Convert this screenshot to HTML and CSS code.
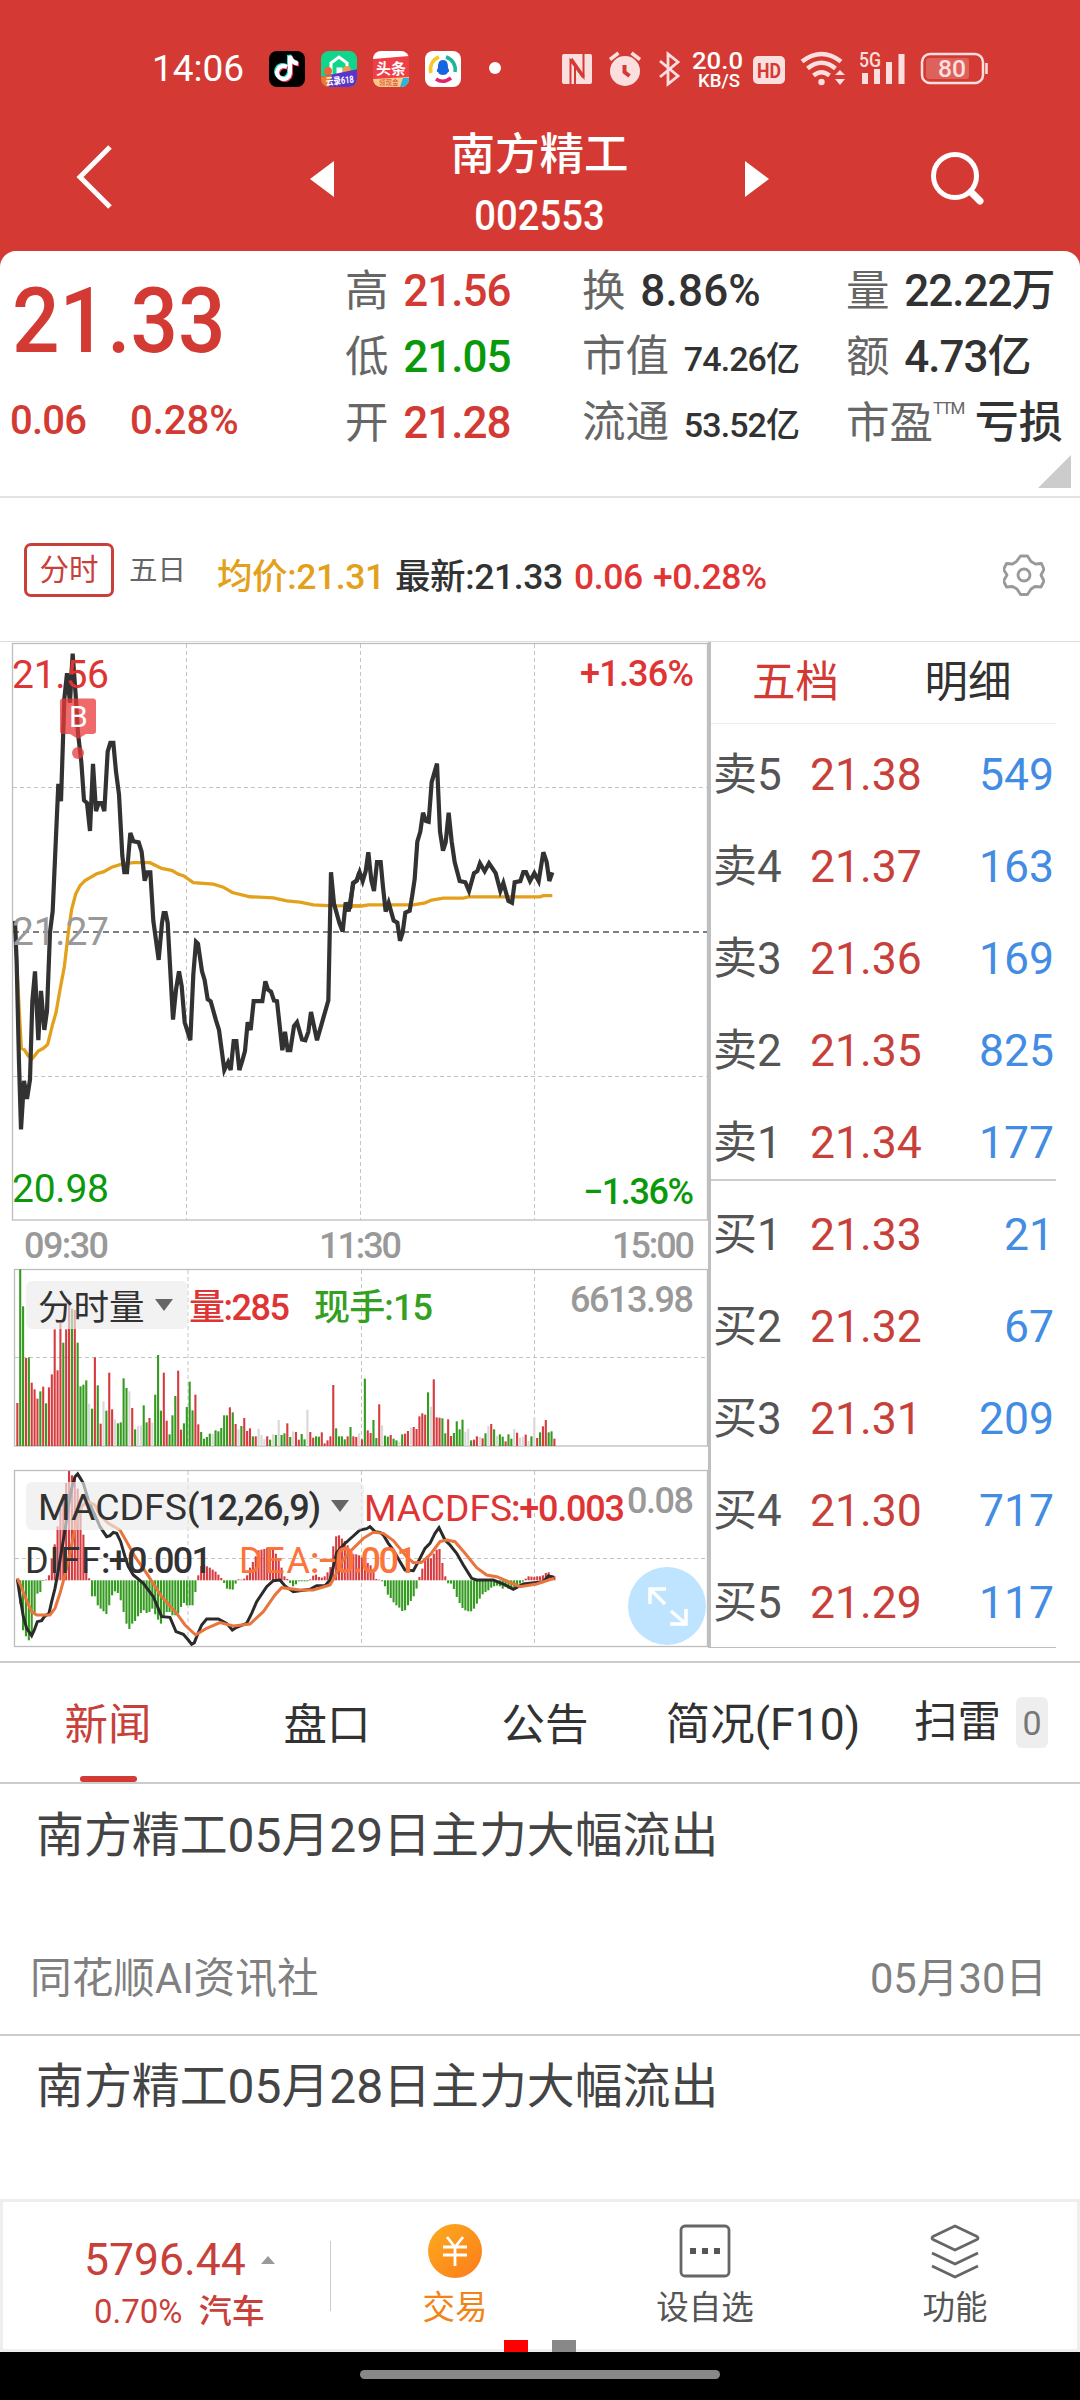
FILE: index.html
```html
<!DOCTYPE html>
<html lang="zh-CN">
  <head>
    <meta charset="UTF-8" />
    <meta name="viewport" content="width=device-width, initial-scale=1" />
    <title>南方精工 002553</title>
    <link rel="stylesheet" href="styles.css" />
  </head>
  <body>
    <header class="header">
      <div class="status">
        <span class="clock">14:06</span>
        <svg class="apps" width="234" height="40" viewBox="267 49 234 40">
          <defs>
            <clipPath id="app2"><rect x="321" y="51" width="36" height="36" rx="8" /></clipPath>
            <clipPath id="app3"><rect x="373" y="51" width="36" height="36" rx="8" /></clipPath>
          </defs>
          <rect x="269" y="51" width="36" height="36" rx="8" fill="#000" />
          <g fill="none" stroke-width="4">
            <path d="M287 67a6.500 6.500 0 1 0 3 6V56c1 5 4 7 8 7.500" stroke="#25e0dc" transform="translate(-1 -1)" />
            <path d="M287 67a6.500 6.500 0 1 0 3 6V56c1 5 4 7 8 7.500" stroke="#f23a5c" transform="translate(1 1)" />
            <path d="M287 67a6.500 6.500 0 1 0 3 6V56c1 5 4 7 8 7.500" stroke="#fff" />
          </g>
          <g clip-path="url(#app2)">
            <rect x="321" y="51" width="36" height="36" fill="#12d58c" />
            <path d="M331 74V63l8-6 8 6v11M338 76v-7h3v7" fill="none" stroke="#fff" stroke-width="3" />
            <circle cx="328" cy="71" r="4" fill="#f2643a" />
            <circle cx="347" cy="70" r="4" fill="#f59a4a" />
            <path d="M320 77l38-8v20h-38z" fill="#5b35c8" />
            <path d="M320 77l12-2-4 13h-8z" fill="#f07a2c" />
          </g>
          <text x="326" y="84" class="app-text" font-size="10" textLength="28" lengthAdjust="spacingAndGlyphs" transform="rotate(-6 340 82)">云录618</text>
          <g clip-path="url(#app3)">
            <rect x="373" y="51" width="36" height="36" fill="#ee3e48" />
            <path d="M373 51h36v5l-36 3z" fill="#fff" />
            <path d="M373 79l36-2v10h-36z" fill="#fbc987" />
            <path d="M400 87l3-9h7v9z" fill="#25b8dd" />
          </g>
          <text x="376" y="74" class="app-text" font-size="15" textLength="30">头条</text>
          <text x="379" y="85" font-size="6.500" fill="#d2442c">领现金</text>
          <rect x="425" y="51" width="36" height="36" rx="8" fill="#fff" />
          <g fill="none" stroke-width="3.500">
            <path d="M431 73a13 13 0 0 1 8-16" stroke="#f3c92e" />
            <path d="M446 57a13 13 0 0 1 9 15" stroke="#22b39a" />
            <path d="M436 79q7 5 15-1" stroke="#e3246c" />
          </g>
          <path d="M443 60c5 0 5 5 5 8 2 3 1 4 0 4q-1 3-5 3t-5-3c-1 0-2-1 0-4 0-3 0-8 5-8z" fill="#1765e0" />
          <circle cx="495" cy="68" r="6" fill="#fff" />
        </svg>
        <svg class="signals" width="430" height="52" viewBox="560 43 430 52">
          <rect x="562" y="54" width="30" height="30" rx="2" fill="#fbdfde" />
          <path d="M570.500 84V60.500l13 16.500V54M575 84V67" fill="none" stroke="#d43a33" stroke-width="2" />
          <path d="M571 59l12.500 18" stroke="#d43a33" stroke-width="3.500" />
          <circle cx="625" cy="71" r="15" fill="#fbdfde" />
          <path d="M610 59.500l8.500-6.500M640 59.500l-8.500-6.500" stroke="#fbdfde" stroke-width="3.500" />
          <path d="M624.500 65v7l5 4" fill="none" stroke="#d43a33" stroke-width="4" />
          <path d="M660 61l18 15-10 8V54l10 8-18 15" fill="none" stroke="#fbdfde" stroke-width="2.800" />
          <text x="692" y="69" class="net" font-size="24" textLength="51" lengthAdjust="spacingAndGlyphs">20.0</text>
          <text x="698" y="86.500" class="net" font-size="18" textLength="42" lengthAdjust="spacingAndGlyphs">KB/S</text>
          <rect x="753" y="56" width="32" height="28" rx="5" fill="#fbdfde" />
          <text x="757" y="77.500" class="hd" font-size="21" textLength="24" lengthAdjust="spacingAndGlyphs">HD</text>
          <g fill="none" stroke="#fbdfde" stroke-width="4.500">
            <path d="M802 61.500q19.500-15 39 0" />
            <path d="M807.500 68.500q14-11.500 28 0" />
            <path d="M813.500 75.500q8-6.500 16 0" />
          </g>
          <circle cx="821.500" cy="82" r="3.200" fill="#fbdfde" />
          <path d="M835 75l5-5 5 5zM835 79h10l-5 6z" fill="#fbdfde" />
          <text x="859" y="67" class="net5" font-size="20" textLength="22" lengthAdjust="spacingAndGlyphs">5G</text>
          <path d="M865 73v11M877 69v15M889 62v22M901.500 54v30" stroke="#fbdfde" stroke-width="6" />
          <rect x="922" y="54" width="61" height="29" rx="8" fill="none" stroke="#fbdfde" stroke-width="2.500" />
          <rect x="926" y="58" width="43" height="21" rx="3" fill="#de625c" />
          <path d="M986.500 63v11" stroke="#fbdfde" stroke-width="2.500" />
          <text x="938" y="77" class="net5" font-size="24" textLength="28" lengthAdjust="spacingAndGlyphs">80</text>
        </svg>
      </div>
      <div class="navbar">
        <svg class="back" width="40" height="68" viewBox="0 0 40 68"><path d="M35 4L5 34l30 30" /></svg>
        <svg class="prev" width="24" height="36" viewBox="0 0 24 36"><path d="M24 0v36L0 18z" /></svg>
        <div class="stock">
          <h1>南方精工</h1>
          <span class="code">002553</span>
        </div>
        <svg class="next" width="24" height="36" viewBox="0 0 24 36"><path d="M0 0v36l24-18z" /></svg>
        <svg class="search" width="56" height="56" viewBox="0 0 56 56">
          <circle cx="25" cy="25" r="21.500" /><path d="M41 41l9 9" />
        </svg>
      </div>
    </header>

    <section class="quote">
      <div class="price">
        <strong>21.33</strong>
        <div class="change"><span>0.06</span><span>0.28%</span></div>
      </div>
      <ul class="col col-a">
        <li>高 <b class="up">21.56</b></li>
        <li>低 <b class="down">21.05</b></li>
        <li>开 <b class="up">21.28</b></li>
      </ul>
      <ul class="col col-b">
        <li>换 <b class="rate">8.86%</b></li>
        <li>市值 <b class="small">74.26亿</b></li>
        <li>流通 <b class="small">53.52亿</b></li>
      </ul>
      <ul class="col col-c">
        <li>量 <b>22.22万</b></li>
        <li>额 <b>4.73亿</b></li>
        <li>市盈<sup>TTM</sup> <b class="loss">亏损</b></li>
      </ul>
      <i class="corner"></i>
    </section>

    <section class="toolbar">
      <span class="mode active">分时</span>
      <span class="mode">五日</span>
      <span class="info avg">均价:21.31</span>
      <span class="info last">最新:21.33</span>
      <span class="info diff">0.06</span>
      <span class="info pct">+0.28%</span>
      <svg class="gear" width="42" height="42" viewBox="-21 -21 42 42">
        <path d="M-3.500-19h7l3.500 5.500 4.500 2.500 6-.5 2.500 6-3 5.500 3 6-3 6-6-.5-4 2.500-3.500 5.500h-7l-3.500-5.500-4.500-2.500-6 .5-3-6 3.500-6-3.500-5.500 3-6 6 .5 4-2.500z" />
        <circle r="6" />
      </svg>
    </section>

    <main class="trade">
      <svg class="chart" width="708" height="1006" viewBox="0 642 708 1006">
        <g class="frame">
          <rect x="12.500" y="643.500" width="695" height="576.500" />
          <rect x="14.500" y="1269.500" width="693" height="176.500" />
          <rect x="14.500" y="1470.500" width="693" height="176" />
        </g>
        <g class="grid">
          <path d="M186.500 644v576M360.500 644v576M534.500 644v576M13 787.500h694M13 1076.500h694" />
          <path d="M188 1270v176M361.500 1270v176M534.500 1270v176M15 1357.500h692" />
          <path d="M188 1471v175M361.500 1471v175M534.500 1471v175M15 1558.500h692" />
        </g>
        <path class="base" d="M13 932h694" />

        <!-- 分时走势 -->
        <g class="line avg-line">
          <polyline transform="translate(0 630) scale(.33333 .3827)" points="45,770 55,950 64,1093 73,1097 85,1113 97,1120 115,1100 130,1093 143,1083 158,1030 168,1000 180,940 193,880 205,790 215,730 227,690 240,668 255,655 290,637 310,632 335,620 365,612 400,608 450,608 485,623 515,628 535,638 550,642 580,660 640,664 670,672 697,686 750,697 820,700 860,708 900,711 940,718 985,720 1080,721" />
          <polyline transform="translate(350 630) scale(.33333 .3954)" points="0,698 35,698 55,695 190,695 225,690 245,683 280,678 340,678 355,675 570,675 580,672 607,672" />
        </g>
        <g class="line price-line">
          <polyline transform="translate(0 630) scale(.33333 .3827)" points="45,760 50,870 57,1130 63,1305 72,1178 81,1225 90,1175 97,970 105,892 115,1072 123,943 133,1045 141,995 150,790 158,735 170,500 175,402 183,447 193,180 201,113 210,190 218,62 227,170 234,270 244,345 252,445 261,452 270,525 279,350 288,473 296,452 305,452 313,473 323,318 331,295 340,295 348,370 357,430 367,590 373,633 381,633 391,530 400,552 416,555 425,580 434,655 442,633 451,633 460,760 476,862 486,765 491,740 497,740 503,765 519,1018 528,940 537,892 545,930 554,1025 571,1072 580,900 588,815 594,820 606,892 614,915 623,965 632,970 648,1020 657,1045 673,1150 684,1130 692,1150 701,1074 709,1074 718,1150 727,1125 735,1100 743,1025 752,1045 761,970 787,970 796,918 804,940 813,945 822,968 831,970 847,1098 855,1050 863,1098 871,1098 882,1035 891,1025 906,1070 916,1072 925,1050 933,998 951,1072 968,1020 985,968 993,633 1002,715 1018,765 1028,788 1037,712 1046,735 1060,662 1070,655 1078,633" />
          <polyline transform="translate(350 630) scale(.33333 .3954)" points="0,705 9,640 21,633 29,613 38,635 47,610 55,562 64,633 72,660 81,587 92,587 99,650 107,712 116,690 131,735 142,740 150,786 158,765 166,715 179,710 187,670 194,630 202,535 211,510 219,462 228,483 236,485 245,385 261,338 270,510 279,558 287,537 296,462 305,535 314,587 329,635 346,638 357,660 372,615 382,610 390,590 404,610 417,590 437,615 451,660 460,640 475,685 486,690 494,638 511,635 520,612 528,612 540,635 553,615 566,635 580,562 590,587 598,635 607,613" />
        </g>
        <g class="buy">
          <path d="M63 698.500h30q3 0 3 3v29.500q0 3-3 3h-7l-8 5-8-5h-7q-3 0-3-3v-29.500q0-3 3-3z" />
          <circle cx="78" cy="753" r="6" />
          <text x="69" y="727" font-size="30" fill="#fff">B</text>
        </g>
        <g font-size="39">
          <text x="12" y="687.500" class="t-red" textLength="97">21.56</text>
          <text x="12" y="945" class="t-gray" textLength="97">21.27</text>
          <text x="12" y="1202" class="t-green" textLength="97">20.98</text>
        </g>
        <g class="din" font-size="36">
          <text x="580" y="685.500" class="t-red" textLength="114">+1.36%</text>
          <text x="583" y="1203.500" class="t-green" textLength="111">−1.36%</text>
          <text x="24" y="1258" class="t-gray" textLength="85">09:30</text>
          <text x="319" y="1258" class="t-gray" textLength="83">11:30</text>
          <text x="612" y="1258" class="t-gray" textLength="83">15:00</text>
        </g>

        <!-- 成交量 -->
        <g id="volume"></g>
        <rect class="pill" x="26" y="1281" width="162" height="48" rx="6" />
        <text x="38" y="1320" font-size="35.500" class="t-dark">分时量</text>
        <path class="arrow" d="M155 1299h18l-9 12z" />
        <g class="din" font-size="36">
          <text x="189" y="1320" class="t-red" textLength="101">量:285</text>
          <text x="314" y="1320" class="t-green2" textLength="119">现手:15</text>
          <text x="570" y="1312" class="t-gray" textLength="124">6613.98</text>
        </g>

        <!-- MACD -->
        <g id="macd"></g>
        <g class="line diff-line">
          <polyline transform="translate(0 1200) scale(.33333)" points="52,1137 60,1190 70,1250 80,1285 95,1307 103,1290 112,1265 125,1262 133,1250 147,1240 155,1205 165,1165 175,1110 185,1050 195,990 205,920 215,865 225,830 233,822 243,838 250,850 265,900 280,935 300,980 320,1010 330,1007 340,997 350,1000 362,1025 375,1070 385,1100 400,1125 430,1150 460,1190 485,1250 510,1252 528,1295 550,1303 565,1320 575,1333 583,1328 590,1310 605,1275 620,1257 655,1257 680,1270 697,1290 710,1282 740,1270 755,1240 770,1205 800,1160 820,1142 840,1140 855,1158 880,1175 930,1168 950,1157 975,1157 990,1140 1000,1100 1010,1058 1030,1035 1060,1008 1080,990 1100,986 1110,980 1125,995 1140,997 1150,1005 1165,1030 1180,1050 1200,1085 1215,1110 1240,1112 1255,1085 1275,1045 1290,1030 1305,1000 1317,983 1335,1020 1350,1035 1370,1060 1390,1095 1415,1135 1430,1140 1480,1140 1510,1152 1540,1168 1570,1152 1630,1145 1645,1128 1662,1132" />
        </g>
        <g class="line dea-line">
          <polyline transform="translate(0 1200) scale(.33333)" points="52,1135 62,1155 75,1190 95,1235 110,1245 150,1245 165,1225 180,1180 195,1125 210,1060 220,1010 232,960 245,920 262,903 285,915 300,945 325,970 360,990 380,1025 405,1070 440,1120 485,1190 530,1240 555,1275 587,1305 620,1285 660,1268 700,1278 750,1272 790,1235 825,1185 845,1163 900,1170 940,1170 990,1155 1005,1130 1025,1085 1055,1050 1090,1015 1120,997 1150,1000 1180,1022 1220,1070 1240,1088 1265,1087 1290,1065 1320,1025 1340,1020 1365,1025 1395,1060 1430,1103 1460,1125 1490,1130 1520,1143 1560,1160 1610,1152 1662,1135" />
        </g>
        <rect class="pill" x="26" y="1482" width="338" height="48" rx="6" />
        <g font-size="36" class="t-dark">
          <text x="38" y="1520" textLength="149" lengthAdjust="spacingAndGlyphs">MACDFS</text>
          <text x="187" y="1520" class="din" textLength="134">(12,26,9)</text>
        </g>
        <path class="arrow" d="M331 1500h18l-9 12z" />
        <g font-size="36">
          <text x="364" y="1521" class="t-red" textLength="148" lengthAdjust="spacingAndGlyphs">MACDFS</text>
          <text x="511" y="1521" class="t-red din" textLength="114">:+0.003</text>
          <text x="627" y="1513" class="t-gray din" textLength="67">0.08</text>
          <text x="25" y="1573" class="t-dark" textLength="76">DIFF</text>
          <text x="101" y="1573" class="t-dark din" textLength="111">:+0.001</text>
          <text x="239" y="1573" class="t-orange" textLength="71">DEA</text>
          <text x="310" y="1573" class="t-orange din" textLength="107">:−0.001</text>
        </g>
        <circle cx="667" cy="1606" r="39" fill="#bfe4ff" />
        <path class="expand" d="M665 1604l-15-15M650 1604v-15h16M671 1611l15 13M686 1609v15h-16" />
      </svg>

      <aside class="book">
        <div class="book-tabs"><span class="on">五档</span><span>明细</span></div>
        <div class="sell">
          <div class="row"><span>卖5</span><b>21.38</b><i>549</i></div>
          <div class="row"><span>卖4</span><b>21.37</b><i>163</i></div>
          <div class="row"><span>卖3</span><b>21.36</b><i>169</i></div>
          <div class="row"><span>卖2</span><b>21.35</b><i>825</i></div>
          <div class="row"><span>卖1</span><b>21.34</b><i>177</i></div>
        </div>
        <div class="buys">
          <div class="row"><span>买1</span><b>21.33</b><i>21</i></div>
          <div class="row"><span>买2</span><b>21.32</b><i>67</i></div>
          <div class="row"><span>买3</span><b>21.31</b><i>209</i></div>
          <div class="row"><span>买4</span><b>21.30</b><i>717</i></div>
          <div class="row"><span>买5</span><b>21.29</b><i>117</i></div>
        </div>
      </aside>
    </main>

    <nav class="tabs">
      <span class="tab on">新闻</span>
      <span class="tab">盘口</span>
      <span class="tab">公告</span>
      <span class="tab">简况(F10)</span>
      <span class="tab mine">扫雷<em>0</em></span>
    </nav>

    <section class="news">
      <article>
        <h2>南方精工05月29日主力大幅流出</h2>
        <div class="meta"><span>同花顺AI资讯社</span><span>05月30日</span></div>
      </article>
      <article>
        <h2>南方精工05月28日主力大幅流出</h2>
      </article>
    </section>

    <footer class="bottom">
      <div class="index">
        <div class="index-value">5796.44<i></i></div>
        <div class="index-sub">0.70% <span>汽车</span></div>
      </div>
      <div class="action trade-btn">
        <svg width="56" height="56" viewBox="0 0 56 56">
          <defs>
            <linearGradient id="gold" x1="0" y1="0" x2="1" y2="1">
              <stop offset="0" stop-color="#fdab1e" /><stop offset="1" stop-color="#fc7c1b" />
            </linearGradient>
          </defs>
          <circle cx="28" cy="28" r="27" fill="url(#gold)" />
          <path d="M20 14l8 10 8-10M28 24v19M16 24h24M16 32h24" fill="none" stroke="#fff" stroke-width="2.800" />
        </svg>
        <span>交易</span>
      </div>
      <div class="action">
        <svg width="56" height="56" viewBox="0 0 56 56">
          <rect x="4" y="3" width="48" height="50" rx="4" fill="none" stroke="#666" stroke-width="2.800" />
          <path d="M13 28h6M25 28h6M37 28h6" stroke="#555" stroke-width="6" />
        </svg>
        <span>设自选</span>
      </div>
      <div class="action">
        <svg width="56" height="56" viewBox="0 0 56 56">
          <path d="M28 3L6 13.500q-2 1.500 0 3L28 27l22-10.500q2-1.500 0-3zM5 30l23 11 23-11M5 43l23 11 23-11" fill="none" stroke="#666" stroke-width="2.800" stroke-linejoin="round" />
        </svg>
        <span>功能</span>
      </div>
      <div class="pager"><i class="on"></i><i></i></div>
    </footer>
    <div class="homebar"><i></i></div>

    <script src="chart.js"></script>
  </body>
</html>
```
FILE: styles.css
```css
* {
  box-sizing: border-box;
}

body {
  margin: 0;
  width: 1080px;
  height: 2400px;
  overflow: hidden;
  background: #d43a33;
  color: #323232;
  font-family: Roboto, "Noto Sans CJK SC", sans-serif;
}

ul {
  margin: 0;
  padding: 0;
  list-style: none;
}

i,
em {
  font-style: normal;
}

svg {
  display: block;
  flex: none;
}

.header {
  height: 251px;
  background: #d43a33;
}

.status {
  display: flex;
  align-items: center;
  height: 102px;
  padding: 36px 0 0 152px;
}

.clock {
  width: 115px;
  color: #fff;
  font-size: 37px;
  line-height: 42px;
}

.signals {
  margin-left: 59px;
}

.app-text {
  fill: #fff;
  font-weight: 700;
}

.net {
  fill: #fff;
  font-weight: 500;
}

.net5 {
  fill: #fbdfde;
  font-weight: 500;
}

.hd {
  fill: #d43a33;
  font-weight: 700;
}

.navbar {
  display: flex;
  height: 149px;
  padding-left: 75px;
}

.back {
  margin-top: 41px;
}

.back path,
.search * {
  fill: none;
  stroke: #fff;
  stroke-width: 5;
}

.search path {
  stroke-width: 7;
  stroke-linecap: round;
}

.prev,
.next {
  margin-top: 59px;
  fill: #fff;
}

.prev {
  margin-left: 195px;
}

.stock {
  width: 411px;
  color: #fff;
  text-align: center;
}

.stock h1 {
  margin: 22px 0 0;
  font-size: 44.5px;
  font-weight: 500;
  line-height: 62px;
}

.code {
  display: block;
  font-size: 42px;
  font-weight: 500;
  line-height: 60px;
  transform: scaleX(0.91);
}

.search {
  margin: 49px 0 0 161px;
}

.quote {
  position: relative;
  display: flex;
  height: 247px;
  padding-top: 7px;
  background: #fff;
  border-radius: 16px 16px 0 0;
  border-bottom: 2px solid #e2e2e2;
}

.price {
  width: 345px;
  color: #d23a33;
  font-weight: 500;
}

.price strong {
  display: block;
  margin: 14px 0 0 12px;
  font-size: 90px;
  font-weight: 500;
  line-height: 100px;
  transform: scaleX(0.93);
  transform-origin: left;
}

.change {
  display: flex;
  margin: 25px 0 0 10px;
  font-size: 40px;
  line-height: 48px;
  letter-spacing: -0.8px;
}

.change span:first-child {
  width: 120px;
}

.change span:last-child {
  letter-spacing: 0;
}

.col li {
  height: 66px;
  color: #666;
  font-size: 43.5px;
  line-height: 66px;
  white-space: nowrap;
  word-spacing: -3px;
}

.col-a {
  width: 237px;
}

.col-b {
  width: 264px;
}

.col b {
  margin-left: 7px;
  color: #323232;
  font-size: 44px;
  font-weight: 500;
  letter-spacing: -1px;
}

.col b.up {
  color: #d23a33;
}

.col b.down {
  color: #0a990a;
}

.col b.rate {
  letter-spacing: 0.2px;
}

.col b.small {
  margin-left: 7px;
  font-size: 34px;
  letter-spacing: -0.9px;
}

.col b.loss {
  margin-left: 7px;
  letter-spacing: 0;
}

.col sup {
  display: inline-block;
  width: 27px;
  font-size: 17px;
  line-height: 20px;
  letter-spacing: -1.5px;
  vertical-align: 24px;
}

.corner {
  position: absolute;
  right: 9px;
  bottom: 8px;
  border-left: 33px solid transparent;
  border-bottom: 33px solid #ccc;
}

.toolbar {
  display: flex;
  align-items: center;
  height: 144px;
  padding: 0 35px 0 24px;
  background: #fff;
  border-bottom: 1px solid #ddd;
}

.mode {
  margin-right: 31px;
  padding-top: 2px;
  color: #666;
  font-size: 28.5px;
  line-height: 48px;
}

.mode.active {
  width: 90px;
  height: 54px;
  margin-right: 15px;
  padding-top: 1px;
  border: 3px solid #c8403a;
  border-radius: 7px;
  color: #c8403a;
  font-size: 29.5px;
  line-height: 47px;
  text-align: center;
}

.info {
  font-size: 35.5px;
  font-weight: 500;
  letter-spacing: -0.4px;
  line-height: 40px;
  white-space: nowrap;
  padding-top: 14px;
}

.avg {
  width: 178px;
  color: #e3a01b;
}

.last {
  width: 179px;
}

.diff {
  width: 79px;
  color: #e03535;
}

.pct {
  color: #e03535;
}

.gear {
  margin: 10px 0 0 auto;
  fill: none;
  stroke: #999;
  stroke-width: 2.8;
  stroke-linejoin: round;
}

.trade {
  display: flex;
  height: 1006px;
  background: #fff;
}

.frame rect {
  fill: none;
  stroke: #bdbdbd;
  stroke-width: 1.3;
}

.grid path {
  stroke: #c4c4c4;
  stroke-width: 1;
  stroke-dasharray: 4 3;
}

.base {
  stroke: #555;
  stroke-width: 1.5;
  stroke-dasharray: 6 4;
}

.line polyline {
  fill: none;
  vector-effect: non-scaling-stroke;
}

.price-line polyline {
  stroke: #323232;
  stroke-width: 4.2;
}

.avg-line polyline {
  stroke: #e3a01b;
  stroke-width: 3.3;
}

.diff-line polyline {
  stroke: #2b2b2b;
  stroke-width: 3;
}

.dea-line polyline {
  stroke: #e9743c;
  stroke-width: 3;
}

.buy path,
.buy circle {
  fill: #e93a3a;
  fill-opacity: 0.75;
}

.din {
  font-weight: 500;
}

.t-red {
  fill: #de3434;
}

.t-green {
  fill: #0a990a;
}

.t-green2 {
  fill: #33a01f;
}

.t-gray {
  fill: #999;
}

.t-dark {
  fill: #323232;
}

.t-orange {
  fill: #fb7439;
}

.pill {
  fill: #ebebeb;
  fill-opacity: 0.66;
}

.arrow {
  fill: #666;
}

.expand {
  fill: none;
  stroke: #fff;
  stroke-width: 3.5;
}

.book {
  width: 348px;
  border-left: 3px solid #bfbfbf;
}

.book-tabs {
  display: flex;
  height: 82px;
  border-bottom: 1px solid #ececec;
  font-size: 43.5px;
  line-height: 82px;
}

.book-tabs span {
  width: 173px;
  padding-left: 41px;
}

.book-tabs .on {
  color: #d23a33;
}

.sell {
  height: 457px;
  padding-top: 5px;
  border-bottom: 2px solid #ccc;
}

.buys {
  height: 467px;
  padding-top: 8px;
  border-bottom: 1px solid #bfbfbf;
}

.row {
  display: flex;
  height: 92px;
  padding-left: 2px;
  font-size: 44.5px;
  line-height: 92px;
}

.row span {
  width: 97px;
  color: #555;
  font-size: 44px;
}

.row b {
  width: 130px;
  color: #c8403a;
  font-weight: 400;
}

.row i {
  flex: 1;
  padding-right: 2px;
  color: #438ce3;
  text-align: right;
}

.tabs {
  display: flex;
  height: 136px;
  padding-top: 13px;
  background: #fff;
  border-bottom: 2px solid #ccc;
}

.tab {
  position: relative;
  flex: none;
  width: 218px;
  border-top: 2px solid #ccc;
  font-size: 43.5px;
  line-height: 125px;
  text-align: center;
}

.tab:nth-child(4) {
  font-size: 44.5px;
}

.tab.on {
  padding-right: 2px;
  color: #c8403a;
}

.tab.on::after {
  content: "";
  position: absolute;
  left: 80px;
  bottom: 0;
  width: 57px;
  height: 6px;
  border-radius: 3px;
  background: #d23a33;
}

.tab.mine {
  display: flex;
  align-items: center;
  width: 208px;
  padding-left: 42px;
}

.mine em {
  width: 32px;
  height: 51px;
  margin-left: 15px;
  border-radius: 6px;
  background: #eee;
  color: #777;
  font-size: 34px;
  line-height: 53px;
}

.news {
  height: 415px;
  background: #fff;
}

.news article {
  height: 252px;
  padding: 19px 33px 0 36px;
  border-bottom: 2px solid #ccc;
}

.news article:last-child {
  height: 163px;
  padding-top: 18px;
  border: 0;
}

.news h2 {
  margin: 0;
  color: #444;
  font-size: 47.9px;
  font-weight: 400;
  line-height: 66px;
}

.meta {
  display: flex;
  justify-content: space-between;
  margin: 80px 0 0 -6px;
  color: #808080;
  font-size: 41.7px;
  line-height: 60px;
}

.bottom {
  position: relative;
  display: flex;
  height: 153px;
  border: 3px solid #eee;
  background: #fff;
}

.index {
  flex: none;
  width: 328px;
  height: 70px;
  margin-top: 39px;
  border-right: 1px solid #ccc;
  color: #c8403a;
}

.index-value {
  display: flex;
  align-items: center;
  margin: -6px 0 0 81px;
  font-size: 44.5px;
  line-height: 50px;
}

.index-value i {
  margin-left: 15px;
  border: 7px solid transparent;
  border-top: 0;
  border-bottom: 8px solid #999;
}

.index-sub {
  margin: 3px 0 0 91px;
  font-size: 33px;
  line-height: 48px;
  white-space: nowrap;
}

.index-sub span {
  margin-left: 8px;
  font-size: 33px;
  font-weight: 500;
}

.action {
  display: flex;
  flex: none;
  flex-direction: column;
  align-items: center;
  width: 250px;
  margin-left: -1px;
  margin-right: 1px;
  padding-top: 21px;
  color: #555;
  font-size: 32.5px;
  line-height: 40px;
}

.action span {
  margin-top: 9px;
}

.trade-btn {
  color: #f08418;
}

.pager {
  position: absolute;
  left: 501px;
  bottom: -3px;
  display: flex;
  gap: 24px;
}

.pager i {
  width: 24px;
  height: 12px;
  background: #888;
}

.pager .on {
  background: #f00;
}

.homebar {
  height: 48px;
  padding-top: 18px;
  background: #000;
}

.homebar i {
  display: block;
  width: 360px;
  height: 9px;
  margin: 0 auto;
  border-radius: 5px;
  background: #888;
}
```
FILE: chart.js
```javascript
// 每分钟一根：r 涨 / g 跌 / x 平，数字为柱高
const volume =
  'r129 g530 g419 r264 g266 r190 r170 r142 g164 r178 g128 r176 r215 r350 r227 r370 g310 r350 r440 g412 ' +
  'r408 g310 g179 g184 g197 x127 g112 r266 g182 r67 x134 g106 r220 r110 x80 g68 g71 g203 g174 x164 ' +
  'r114 g50 x60 x62 g122 g71 r84 x70 g154 g273 g106 r220 r76 g35 g92 g150 r226 r49 g68 g117 ' +
  'g193 g107 r154 r65 g42 g22 g27 g37 x37 g47 g44 g54 g92 g92 r116 g101 r66 x50 g60 r84 ' +
  'r45 r53 g29 r29 x52 x33 x20 r29 g19 x35 g33 x78 g33 g38 r68 g27 x44 r42 r19 g36 ' +
  'g20 x109 r42 r25 g29 g28 r41 r8 r17 r29 r183 g53 g29 g29 g20 r29 g57 r29 r27 x38 ' +
  'r20 g202 r47 r39 g78 g24 r125 x62 g31 g28 r33 g22 g17 x13 g35 r37 r45 x55 r57 r51 ' +
  'r89 r98 r94 g161 x118 r200 r86 r85 g83 g38 r80 r30 g39 g74 g50 g79 x43 x52 g17 r19 ' +
  'r29 x27 r23 g38 x60 r66 g50 x30 g35 g28 r14 g35 g22 x51 r40 x25 x28 r34 x15 g29 ' +
  'x85 r24 g41 r59 r78 g41 g44 r22';

const macd = [
  5, -70, -150, -168, -180, -165, -100, -40, -35, -2, 2, 15, 65, 108, 162, 215, 255, 292, 328, 315,
  308, 275, 205, 137, 65, 6, -48, -48, -75, -85, -93, -101, -75, -45, -33, -38, -60, -95, -130, -146,
  -130, -122, -108, -98, -90, -98, -95, -85, -102, -118, -130, -112, -95, -95, -105, -105, -100, -80, -68, -75,
  -75, -75, -35, 15, 43, 47, 42, 38, 32, 26, 17, 7, -8, -25, -27, -28, -10, 3, 2, 5,
  15, 38, 55, 72, 90, 92, 94, 98, 95, 93, 80, 60, 38, 12, 4, -8, -18, -12, -3, -3,
  -3, -3, 3, 14, 17, 10, 8, 12, 24, 40, 102, 132, 135, 125, 118, 105, 80, 78, 78, 75,
  68, 60, 52, 45, 30, 4, 2, -3, -18, -43, -53, -66, -75, -82, -92, -90, -75, -62, -48, -25,
  10, 35, 60, 66, 66, 80, 92, 94, 52, 12, -9, -10, -26, -50, -68, -83, -90, -93, -93, -85,
  -70, -55, -42, -35, -30, -22, -18, -16, -18, -25, -20, -25, -22, -20, -18, -10, -4, 5, 12, 11,
  10, 12, 12, 15, 22, 24, 14, 12,
];

const colors = { r: '#d63c3f', g: '#349a20', x: '#d8d8d8' };

function drawBars(id, bars, base) {
  const group = document.getElementById(id);
  bars.forEach(function (bar, i) {
    const rect = document.createElementNS('http://www.w3.org/2000/svg', 'rect');
    const height = Math.abs(bar.value) / 3;
    rect.setAttribute('x', (16.3 + i * 2.872).toFixed(2));
    rect.setAttribute('y', bar.value > 0 ? base - height : base);
    rect.setAttribute('width', 2.1);
    rect.setAttribute('height', height);
    rect.setAttribute('fill', colors[bar.type]);
    group.appendChild(rect);
  });
}

drawBars(
  'volume',
  volume.split(' ').map((s) => ({ type: s[0], value: Number(s.slice(1)) })),
  1446,
);
drawBars(
  'macd',
  macd.map((v) => ({ type: v > 0 ? 'r' : 'g', value: v })),
  1580.3,
);
```
